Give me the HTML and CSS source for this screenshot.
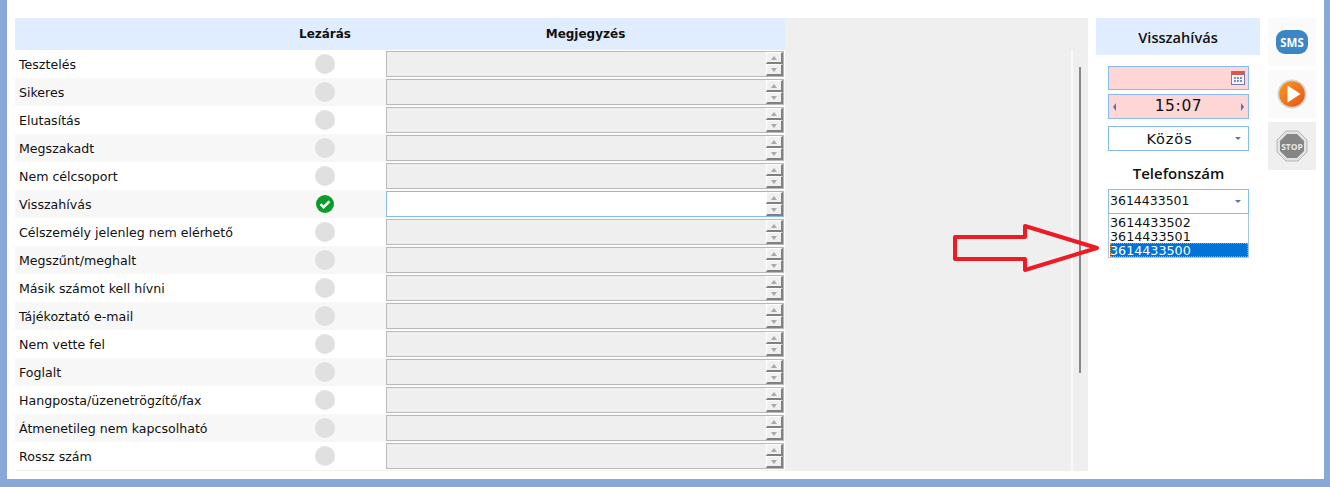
FILE: index.html
```html
<!DOCTYPE html>
<html lang="hu">
<head>
<meta charset="utf-8">
<title>Visszahívás</title>
<link rel="stylesheet" href="styles.css">
</head>
<body>
<div class="frame">
  <section class="table">
    <div class="thead"><span></span><b class="th">Lezárás</b><b class="th">Megjegyzés</b></div>
    <div class="row"><span class="label">Tesztelés</span><span class="cell"><i class="dot"></i></span><div class="note"><div class="spin"><i class="up"></i><i class="down"></i></div></div></div>
    <div class="row"><span class="label">Sikeres</span><span class="cell"><i class="dot"></i></span><div class="note"><div class="spin"><i class="up"></i><i class="down"></i></div></div></div>
    <div class="row"><span class="label">Elutasítás</span><span class="cell"><i class="dot"></i></span><div class="note"><div class="spin"><i class="up"></i><i class="down"></i></div></div></div>
    <div class="row"><span class="label">Megszakadt</span><span class="cell"><i class="dot"></i></span><div class="note"><div class="spin"><i class="up"></i><i class="down"></i></div></div></div>
    <div class="row"><span class="label">Nem célcsoport</span><span class="cell"><i class="dot"></i></span><div class="note"><div class="spin"><i class="up"></i><i class="down"></i></div></div></div>
    <div class="row"><span class="label">Visszahívás</span><span class="cell"><svg class="check" viewBox="0 0 18 18"><circle cx="9" cy="9" r="9" fill="#0a9c2b"/><path d="M4.6 9.2 7.6 12.2 13.4 6.4" fill="none" stroke="#fff" stroke-width="2.6"/></svg></span><div class="note active"><div class="spin"><i class="up"></i><i class="down"></i></div></div></div>
    <div class="row"><span class="label">Célszemély jelenleg nem elérhető</span><span class="cell"><i class="dot"></i></span><div class="note"><div class="spin"><i class="up"></i><i class="down"></i></div></div></div>
    <div class="row"><span class="label">Megszűnt/meghalt</span><span class="cell"><i class="dot"></i></span><div class="note"><div class="spin"><i class="up"></i><i class="down"></i></div></div></div>
    <div class="row"><span class="label">Másik számot kell hívni</span><span class="cell"><i class="dot"></i></span><div class="note"><div class="spin"><i class="up"></i><i class="down"></i></div></div></div>
    <div class="row"><span class="label">Tájékoztató e-mail</span><span class="cell"><i class="dot"></i></span><div class="note"><div class="spin"><i class="up"></i><i class="down"></i></div></div></div>
    <div class="row"><span class="label">Nem vette fel</span><span class="cell"><i class="dot"></i></span><div class="note"><div class="spin"><i class="up"></i><i class="down"></i></div></div></div>
    <div class="row"><span class="label">Foglalt</span><span class="cell"><i class="dot"></i></span><div class="note"><div class="spin"><i class="up"></i><i class="down"></i></div></div></div>
    <div class="row"><span class="label">Hangposta/üzenetrögzítő/fax</span><span class="cell"><i class="dot"></i></span><div class="note"><div class="spin"><i class="up"></i><i class="down"></i></div></div></div>
    <div class="row"><span class="label">Átmenetileg nem kapcsolható</span><span class="cell"><i class="dot"></i></span><div class="note"><div class="spin"><i class="up"></i><i class="down"></i></div></div></div>
    <div class="row"><span class="label">Rossz szám</span><span class="cell"><i class="dot"></i></span><div class="note"><div class="spin"><i class="up"></i><i class="down"></i></div></div></div>
  </section>

  <section class="filler">
    <div class="rail"><div class="thumb"></div></div>
  </section>

  <section class="side">
    <h2 class="side-title">Visszahívás</h2>
    <div class="controls">
      <div class="field pink date">
        <svg class="cal" viewBox="0 0 14 14"><rect x=".5" y=".5" width="13" height="13" fill="#f4f6fb" stroke="#6f7fb0"/><rect x="1" y="1" width="12" height="3" fill="#d9574f"/><g fill="#7c8fc4"><rect x="3" y="6" width="2" height="2"/><rect x="6" y="6" width="2" height="2"/><rect x="9" y="6" width="2" height="2"/><rect x="3" y="9" width="2" height="2"/><rect x="6" y="9" width="2" height="2"/><rect x="9" y="9" width="2" height="2"/></g></svg>
      </div>
      <div class="field pink time"><i class="tri-left"></i><span>15:07</span><i class="tri-right"></i></div>
      <div class="field combo common"><span>Közös</span><i class="tri-down"></i></div>
      <h3 class="phone-title">Telefonszám</h3>
      <div class="field combo phone"><span>3614433501</span><i class="tri-down"></i></div>
      <ul class="list">
        <li>3614433502</li>
        <li>3614433501</li>
        <li class="selected">3614433500</li>
      </ul>
    </div>
  </section>

  <aside class="tools">
    <div class="tool">
      <svg viewBox="0 0 48 48"><rect x="8" y="12" width="32" height="24" rx="9" fill="#3b86c4"/><text x="24" y="28.5" text-anchor="middle" class="sms">SMS</text></svg>
    </div>
    <div class="tool">
      <svg viewBox="0 0 48 48"><defs><linearGradient id="o" x1="0" y1="0" x2="1" y2="1"><stop offset="0" stop-color="#f99a1c"/><stop offset="1" stop-color="#e8541a"/></linearGradient></defs><circle cx="24" cy="24" r="14.5" fill="#d4d4d4"/><circle cx="24" cy="24" r="12.8" fill="url(#o)"/><path d="M19.5 15.5 32.5 24 19.5 32.5Z" fill="#fff"/></svg>
    </div>
    <div class="tool stop">
      <svg viewBox="0 0 48 48"><path d="M18 9H30L39 18V30L30 39H18L9 30V18Z" fill="#e2e2e2" stroke="#b5b5b5"/><path d="M19 12H29L36 19V29L29 36H19L12 29V19Z" fill="#858585"/><text x="24" y="28" text-anchor="middle" class="stoptext">STOP</text></svg>
    </div>
  </aside>

  <svg class="arrow" viewBox="0 0 150 52" width="150" height="52"><path d="M3 13H73V2L145 24 73 46V35H3Z" fill="none" stroke="#ed1c24" stroke-width="4" stroke-linejoin="round"/></svg>
</div>
</body>
</html>
```
FILE: styles.css
```css
* { box-sizing: border-box; }
html, body { margin: 0; height: 487px; overflow: hidden; }
body { font-family: "DejaVu Sans", Verdana, sans-serif; font-size: 13px; color: #111; background: #fff; }
.frame {
  position: relative;
  display: flex;
  height: 487px;
  padding: 18px 8px 9px 8px;
  background: #fff;
  border-left: 7px solid #88a9d8;
  border-right: 6px solid #88a9d8;
  border-bottom: 8px solid #88a9d8;
}
.table { width: 770px; flex: none; border-bottom: 1px solid #f2f2f2; height: 453px; }
.thead, .row { display: grid; grid-template-columns: 249px 122px 399px; }
.thead { height: 32px; background: #e0edff; align-items: center; }
.th { text-align: center; font-size: 12px; font-weight: bold; }
.row { height: 28px; align-items: center; }
.row:nth-child(odd) { background: #f7f7f7; }
.label { padding-left: 4px; white-space: nowrap; font-size: 12.6px; }
.cell { display: flex; justify-content: center; align-items: center; }
.dot { display: block; width: 20px; height: 20px; border-radius: 50%; background: #e0e0e0; }
.check { display: block; width: 18px; height: 18px; }
.note {
  width: 398px;
  height: 26px;
  background: #efefef;
  border: 1px solid #b9b9b9;
  display: flex;
  justify-content: flex-end;
  padding: 0;
}
.note.active { background: #fff; border: 1px solid #88bbef; }
.spin { width: 17px; height: 24px; display: flex; flex-direction: column; }
.spin i {
  display: block;
  flex: 1;
  position: relative;
  background: #f0f0f0;
  border-top: 1px solid #fff;
  border-left: 1px solid #fff;
  border-right: 2px solid #808080;
  border-bottom: 2px solid #808080;
}
.spin i::after {
  content: "";
  position: absolute;
  left: 4px;
  top: 3px;
  border-left: 3.5px solid transparent;
  border-right: 3.5px solid transparent;
}
.spin .up::after { border-bottom: 4px solid #a8a8a8; }
.spin .down::after { border-top: 4px solid #a8a8a8; }

.filler { width: 303px; flex: none; height: 453px; background: #efefef; padding: 32px 0 0 286px; }
.rail { width: 17px; height: 100%; border-left: 2px solid #fafafa; padding: 17px 0 0 6px; }
.thumb { width: 2px; height: 306px; background: #888; }

.side { width: 164px; flex: none; margin-left: 8px; }
.side-title {
  margin: 0;
  height: 37px;
  line-height: 39px;
  background: #e0edff;
  text-align: center;
  font-family: "Open Sans", sans-serif;
  font-size: 14.6px;
  font-weight: 600;
}
.controls { padding: 11px 11px 0 12px; }
.field { width: 141px; border: 1px solid #88bbef; background: #fff; display: flex; align-items: center; }
.pink { background: #ffd6d6; }
.date { height: 24px; justify-content: flex-end; padding-right: 3px; margin-bottom: 4px; }
.cal { width: 14px; height: 14px; display: block; }
.time { height: 25px; justify-content: space-between; padding: 0 4px; margin-bottom: 7px; font-size: 15.5px; letter-spacing: .6px; line-height: 21px; align-items: center; }
.combo { height: 25px; position: relative; padding: 0 2px; }
.common { justify-content: center; font-size: 14.5px; letter-spacing: .9px; padding-right: 20px; }
.phone-title {
  margin: 13px 0 3px;
  height: 22px;
  line-height: 19px;
  text-align: center;
  font-family: "Open Sans", sans-serif;
  font-size: 15px;
  font-weight: 600;
}
.phone { height: 25px; font-size: 12.5px; padding: 0 2px 2px 1px; }
.tri-left, .tri-right, .tri-down { display: block; width: 0; height: 0; }
.tri-left { border-top: 4px solid transparent; border-bottom: 4px solid transparent; border-right: 3px solid #4a78c0; }
.tri-right { border-top: 4px solid transparent; border-bottom: 4px solid transparent; border-left: 3px solid #4a78c0; }
.tri-down { position: absolute; right: 7px; top: 10px; border-left: 3px solid transparent; border-right: 3px solid transparent; border-top: 3px solid #4a78c0; }
.list {
  list-style: none;
  margin: 0;
  padding: 1px 0 0 1px;
  width: 141px;
  height: 44px;
  border: 1px solid #a6c5ea;
  border-top: 0;
  font-size: 12.7px;
  line-height: 16px;
  background: #fff;
}
.list li { height: 14px; padding-left: 0; }
.list .selected { background: #0073d6; color: #fff; outline: 1px dotted #e8902a; outline-offset: -1px; }

.tools { width: 48px; flex: none; margin-left: 8px; display: flex; flex-direction: column; gap: 4px; }
.tool { width: 48px; height: 48px; background: #fafafa; }
.tool.stop { background: #efefef; }
.tool svg { display: block; width: 48px; height: 48px; }
.sms { font-family: "Open Sans", sans-serif; font-size: 11.5px; font-weight: 700; fill: #fff; }
.stoptext { font-family: "Open Sans", sans-serif; font-size: 8.5px; font-weight: 700; fill: #e8e8e8; }

.arrow { position: absolute; left: 945px; top: 224px; display: block; }
```
